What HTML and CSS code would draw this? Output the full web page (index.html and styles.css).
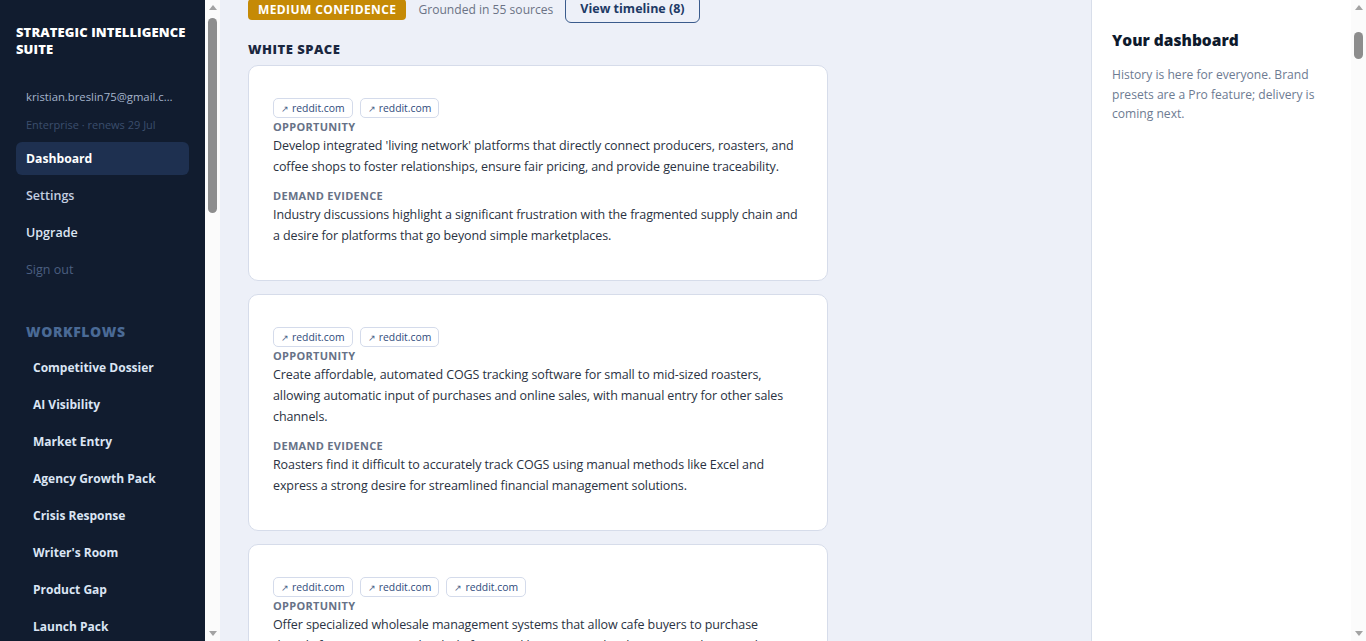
FILE: index.html
```html
<!DOCTYPE html>
<html lang="en">
<head>
<meta charset="UTF-8" />
<meta name="viewport" content="width=device-width, initial-scale=1" />
<title>Dashboard · Strategic Intelligence Suite</title>
<link rel="stylesheet" href="styles.css">
</head>
<body>

<div class="app">
  <aside class="sidebar">
    <div class="brand">Strategic Intelligence Suite</div>

    <div class="account">
      <div class="email">kristian.breslin75@gmail.com</div>
      <div class="plan">Enterprise · renews 29 Jul</div>
    </div>

    <nav class="nav">
      <span class="nav-item active">Dashboard</span>
      <span class="nav-item">Settings</span>
      <span class="nav-item strong">Upgrade</span>
      <span class="nav-item muted">Sign out</span>
    </nav>

    <div class="group-title">Workflows</div>
    <nav class="workflows">
      <span>Competitive Dossier</span>
      <span>AI Visibility</span>
      <span>Market Entry</span>
      <span>Agency Growth Pack</span>
      <span>Crisis Response</span>
      <span>Writer's Room</span>
      <span>Product Gap</span>
      <span>Launch Pack</span>
      <span>Pricing Watch</span>
      <span>Board Brief</span>
      <span>Investor Update</span>
      <span>Review Miner</span>
    </nav>
  </aside>

  <div class="scrollbar">
    <span class="sb-arrow up"></span>
    <div class="sb-track"><span class="sb-thumb sidebar-thumb"></span></div>
    <span class="sb-arrow down"></span>
  </div>

  <main class="main">
    <div class="meta">
      <span class="badge">Medium confidence</span>
      <span class="grounded">Grounded in 55 sources</span>
      <span class="btn-outline">View timeline (8)</span>
    </div>

    <h2 class="section-title">White space</h2>

    <div class="cards">
      <div class="card">
        <div class="chips">
          <span class="chip"><i>↗</i>reddit.com</span>
          <span class="chip"><i>↗</i>reddit.com</span>
        </div>
        <div class="label">Opportunity</div>
        <p>Develop integrated 'living network' platforms that directly connect producers, roasters, and coffee shops to foster relationships, ensure fair pricing, and provide genuine traceability.</p>
        <div class="label spaced">Demand evidence</div>
        <p>Industry discussions highlight a significant frustration with the fragmented supply chain and a desire for platforms that go beyond simple marketplaces.</p>
      </div>

      <div class="card">
        <div class="chips">
          <span class="chip"><i>↗</i>reddit.com</span>
          <span class="chip"><i>↗</i>reddit.com</span>
        </div>
        <div class="label">Opportunity</div>
        <p>Create affordable, automated COGS tracking software for small to mid-sized roasters, allowing automatic input of purchases and online sales, with manual entry for other sales channels.</p>
        <div class="label spaced">Demand evidence</div>
        <p>Roasters find it difficult to accurately track COGS using manual methods like Excel and express a strong desire for streamlined financial management solutions.</p>
      </div>

      <div class="card">
        <div class="chips">
          <span class="chip"><i>↗</i>reddit.com</span>
          <span class="chip"><i>↗</i>reddit.com</span>
          <span class="chip"><i>↗</i>reddit.com</span>
        </div>
        <div class="label">Opportunity</div>
        <p>Offer specialized wholesale management systems that allow cafe buyers to purchase directly from roasters and include features like automated ordering, compilation and recurring invoices.</p>
        <div class="label spaced">Demand evidence</div>
        <p>Wholesale accounts are still managed by email and spreadsheets, and roasters describe order handling as one of their most time-consuming weekly tasks.</p>
      </div>
    </div>
  </main>

  <aside class="panel">
    <h3>Your dashboard</h3>
    <p>History is here for everyone. Brand presets are a Pro feature; delivery is coming next.</p>
  </aside>

  <div class="scrollbar">
    <span class="sb-arrow up"></span>
    <div class="sb-track"><span class="sb-thumb page-thumb"></span></div>
    <span class="sb-arrow down"></span>
  </div>
</div>

<script src="script.js"></script>
</body>
</html>
```

FILE: styles.css
```css
* {
  box-sizing: border-box;
}
body {
  margin: 0;
  font-family: "Open Sans", "Noto Sans", Arial, sans-serif;
  background: #edf0f8;
  color: #2a3242;
  -webkit-font-smoothing: antialiased;
}
.app {
  display: grid;
  grid-template-columns: 205px 15px 1fr 260px 15px;
  height: 100vh;
  overflow: hidden;
}

/* classic scrollbar: arrow, track with thumb, arrow */
.scrollbar {
  display: flex;
  flex-direction: column;
  background: #fbfbfb;
}
.sb-arrow {
  flex: none;
  height: 15px;
  display: flex;
  align-items: center;
  justify-content: center;
}
.sb-arrow::before {
  content: "";
  border-left: 4px solid transparent;
  border-right: 4px solid transparent;
}
.sb-arrow.up::before {
  border-bottom: 5px solid #a3a3a3;
}
.sb-arrow.down::before {
  border-top: 5px solid #a3a3a3;
}
.sb-track {
  flex: 1;
  padding: 0 3px;
}
.sb-thumb {
  display: block;
  background: #8d8d8d;
  border-radius: 5px;
}
.sidebar-thumb {
  margin-top: 3px;
  height: 195px;
}
.page-thumb {
  margin-top: 17px;
  height: 27px;
}

/* left navigation */
.sidebar {
  overflow: hidden;
  background: #111c2f;
  padding: 24px 16px 40px;
}
.brand {
  color: #fff;
  font-size: 13px;
  font-weight: 800;
  line-height: 17px;
  text-transform: uppercase;
  letter-spacing: 0.1px;
}
.account {
  padding: 0 10px;
  margin-top: 31px;
}
.email {
  color: #a5b4cc;
  font-size: 11.3px;
  line-height: 16px;
  white-space: nowrap;
  overflow: hidden;
  text-overflow: ellipsis;
}
.plan {
  color: #3b4e6d;
  font-size: 11px;
  line-height: 15px;
  margin-top: 12px;
}
.nav {
  display: flex;
  flex-direction: column;
  gap: 4px;
  margin-top: 10px;
}
.nav-item {
  display: block;
  height: 33px;
  line-height: 33px;
  padding: 0 10px;
  border-radius: 6px;
  color: #c3cee0;
  font-size: 12.5px;
  font-weight: 600;
}
.nav-item.active {
  background: #1e3050;
  color: #fff;
  font-weight: 700;
  font-size: 12.2px;
}
.nav-item.strong {
  color: #dde6f3;
}
.nav-item.muted {
  color: #4b5f80;
  font-weight: 500;
}
.group-title {
  margin-top: 37px;
  padding: 0 10px;
  color: #4a6a96;
  font-size: 14px;
  font-weight: 800;
  line-height: 18px;
  text-transform: uppercase;
  letter-spacing: 0.6px;
}
.workflows {
  display: flex;
  flex-direction: column;
  gap: 4px;
  margin-top: 10px;
}
.workflows span {
  display: block;
  height: 33px;
  line-height: 33px;
  padding: 0 17px;
  color: #dbe5f4;
  font-size: 12px;
  font-weight: 700;
}

/* report column */
.main {
  overflow-y: auto;
  padding: 30px 28px 60px;
  min-width: 0;
}
.meta {
  display: flex;
  align-items: center;
  gap: 12px;
  height: 28px;
}
.badge {
  background: #c58a06;
  color: #fff;
  font-size: 12px;
  font-weight: 700;
  line-height: 21px;
  padding: 0 10px;
  border-radius: 4px;
  text-transform: uppercase;
  letter-spacing: 0.4px;
}
.grounded {
  color: #6b7385;
  font-size: 12.1px;
}
.btn-outline {
  height: 28px;
  line-height: 26px;
  padding: 0 14px;
  border: 1px solid #3a5b8c;
  border-radius: 6px;
  color: #1d3a66;
  font-size: 12.5px;
  font-weight: 700;
}
.section-title {
  margin: 17px 0 7px;
  color: #1a2740;
  font-size: 13px;
  font-weight: 800;
  line-height: 18px;
  text-transform: uppercase;
  letter-spacing: 0.5px;
}
.cards {
  display: flex;
  flex-direction: column;
  gap: 13px;
  max-width: 580px;
}
.card {
  background: #fff;
  border: 1px solid #d6dcea;
  border-radius: 10px;
  padding: 32px 24px 34px;
}
.chips {
  display: flex;
  gap: 7px;
}
.chip {
  height: 20px;
  line-height: 18px;
  padding: 0 7px;
  border: 1px solid #d4dbeb;
  border-radius: 5px;
  color: #2f4b7c;
  font-size: 10.4px;
}
.chip i {
  font-style: normal;
  font-size: 9px;
  color: #4b6287;
  margin-right: 3px;
}
.label {
  margin-top: 1px;
  color: #677287;
  font-size: 11px;
  font-weight: 700;
  line-height: 16px;
  text-transform: uppercase;
  letter-spacing: 0.3px;
}
.label.spaced {
  margin-top: 11px;
}
.card p {
  margin: 0;
  font-size: 12.5px;
  letter-spacing: -0.1px;
  line-height: 21px;
  color: #2a3242;
}

/* right info panel */
.panel {
  background: #fff;
  border-left: 1px solid #d8deea;
  padding: 30px 20px;
}
.panel h3 {
  margin: 0;
  color: #0e1a2d;
  font-size: 15.5px;
  font-weight: 800;
  line-height: 20px;
}
.panel p {
  margin: 15px 0 0;
  color: #6d7b92;
  font-size: 12.1px;
  line-height: 19.5px;
}
```

FILE: script.js
```js
// open the report at the confidence row
document.querySelector(".main").scrollTop = 35;
```
